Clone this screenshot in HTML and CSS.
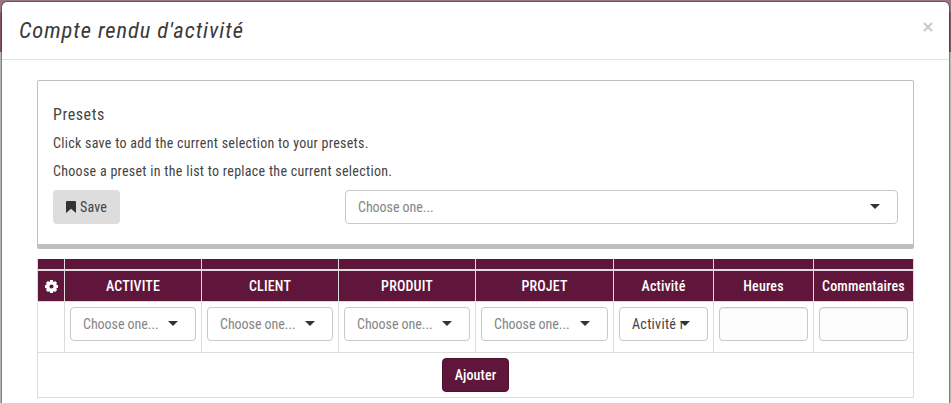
FILE: index.html
```html
<!DOCTYPE html>
<html lang="fr">
<head>
<meta charset="utf-8">
<title>Compte rendu d'activité</title>
<link rel="stylesheet" href="styles.css">
</head>
<body>
<main class="modal">
  <header class="modal-header">
    <h1>Compte rendu d'activité</h1>
    <button class="close" aria-label="Close"><svg width="10" height="10" viewBox="0 0 10 10"><path d="M1 1 9 9M9 1 1 9"/></svg></button>
  </header>
  <div class="modal-body">
    <section class="presets">
      <h2>Presets</h2>
      <p>Click save to add the current selection to your presets.</p>
      <p>Choose a preset in the list to replace the current selection.</p>
      <div class="preset-row">
        <button class="save"><svg width="10" height="12" viewBox="0 0 10 12"><path d="M1 0h8q1 0 1 1v11L5 7.7 0 12V1q0-1 1-1z"/></svg><span>Save</span></button>
        <div class="select preset-select"><span>Choose one...</span><i class="caret"></i></div>
      </div>
    </section>
    <section class="sheet">
      <div class="row strip"><b></b><b></b><b></b><b></b><b></b><b></b><b></b><b></b></div>
      <div class="row head">
        <b><svg width="13" height="13" viewBox="0 0 12 12"><g fill="#fff"><circle cx="6" cy="6" r="4.9"/><path id="t" d="M4.7 0h2.6l.4 2.5H4.3zM4.3 9.5h3.4L7.3 12H4.7z"/><use href="#t" transform="rotate(45 6 6)"/><use href="#t" transform="rotate(90 6 6)"/><use href="#t" transform="rotate(135 6 6)"/></g><circle cx="6" cy="6" r="1.9" fill="#5f163a"/></svg></b>
        <b>ACTIVITE</b><b>CLIENT</b><b>PRODUIT</b><b>PROJET</b><b>Activité</b><b>Heures</b><b>Commentaires</b>
      </div>
      <div class="row entry">
        <div></div>
        <div><div class="select"><span>Choose one...</span><i class="caret"></i></div></div>
        <div><div class="select"><span>Choose one...</span><i class="caret"></i></div></div>
        <div><div class="select"><span>Choose one...</span><i class="caret"></i></div></div>
        <div><div class="select"><span>Choose one...</span><i class="caret"></i></div></div>
        <div><div class="select chosen"><span>Activité r</span><i class="caret"></i></div></div>
        <div><div class="field"></div></div>
        <div><div class="field"></div></div>
      </div>
      <div class="footer"><button class="add">Ajouter</button></div>
    </section>
  </div>
</main>
</body>
</html>
```
FILE: styles.css
```css
* { box-sizing: border-box; }
body {
  margin: 0;
  height: 403px;
  overflow: hidden;
  padding: 1px 1px 0;
  background: linear-gradient(#9d7485 0, #9d7485 12px, #83536a 13px, #83536a 52px, #b5b5b5 52px);
  font: 14px/20px Roboto, "Liberation Sans", sans-serif;
  font-stretch: 87.5%;
  color: #444;
}
h1, h2, p { margin: 0; font-weight: 400; white-space: nowrap; }
button { font: inherit; font-stretch: 87.5%; border: 0; padding: 0; }
svg { display: block; flex: none; }
.modal {
  height: 420px;
  background: #fff;
  border: 1px solid rgba(0, 0, 0, .3);
  background-clip: padding-box;
  border-radius: 6px;
}
.modal-header {
  height: 58px;
  border-bottom: 1px solid #e2e2e2;
  padding: 0 16px 2px 17px;
  display: flex;
  align-items: center;
  justify-content: space-between;
}
h1 { font-size: 22.5px; line-height: 30px; font-style: italic; letter-spacing: .94px; color: #3a3a3a; }
.close { background: none; margin-bottom: 5px; }
.close path { fill: none; stroke: #c9c9c9; stroke-width: 2.2; }
.modal-body { padding: 20px 35px 0; }
.presets {
  width: 877px;
  height: 169px;
  padding: 24px 15px 0;
  border: 1px solid #bfbfbf;
  border-bottom-width: 5px;
  border-radius: 2px;
}
.presets h2 { font-size: 16px; line-height: 20px; margin-bottom: 8px; letter-spacing: .55px; }
.presets p { margin-bottom: 8px; letter-spacing: .285px; }
.preset-row { display: flex; justify-content: space-between; margin-top: 9px; }
.save {
  width: 67px;
  height: 34px;
  border-radius: 4px;
  background: #ddd;
  color: #444;
  display: flex;
  align-items: center;
  justify-content: center;
  gap: 4px;
  letter-spacing: .2px;
}
.save path { fill: #333; }
.select {
  height: 34px;
  border: 1px solid #c8c8c8;
  border-radius: 4px;
  background: #fff;
  color: #858585;
  padding: 0 17px 0 12px;
  display: flex;
  align-items: center;
  justify-content: space-between;
  white-space: nowrap;
  letter-spacing: -.05px;
}
.preset-select { width: 553px; }
.caret {
  border: 5px solid transparent;
  border-top-color: #333;
  border-bottom: 0;
  margin-bottom: 1px;
}
.sheet { width: 877px; margin-top: 10px; border-left: 1px solid #ddd; }
.row { display: grid; grid-template-columns: 27px repeat(3, 137px) 138px repeat(3, 100px); }
.row > * { border-right: 1px solid #ddd; }
.strip b { height: 12px; background: #5f163a; border-bottom: 2px solid #ddd; }
.head b {
  height: 31px;
  background: #5f163a;
  border-bottom: 1px solid #ddd;
  color: #fff;
  font-weight: 500;
  letter-spacing: .15px;
  display: flex;
  align-items: center;
  justify-content: center;
  white-space: nowrap;
}
.entry > div { height: 51px; padding: 5px; border-bottom: 1px solid #ddd; }
.chosen { color: #444; letter-spacing: .3px; }
.chosen .caret { margin-left: -7px; flex: none; }
.field {
  height: 34px;
  border: 1px solid #c8c8c8;
  border-radius: 4px;
  background: #fdfdfd;
  box-shadow: inset 0 1px 1px rgba(0, 0, 0, .075);
}
.footer {
  height: 45px;
  border: 1px solid #ddd;
  border-width: 0 1px 1px 0;
  display: flex;
  justify-content: center;
  padding-top: 5px;
}
.add {
  width: 67px;
  height: 34px;
  border: 1px solid #4e102f;
  border-radius: 4px;
  background: #5f163a;
  color: #fff;
  font-weight: 500;
  letter-spacing: .15px;
}
```
